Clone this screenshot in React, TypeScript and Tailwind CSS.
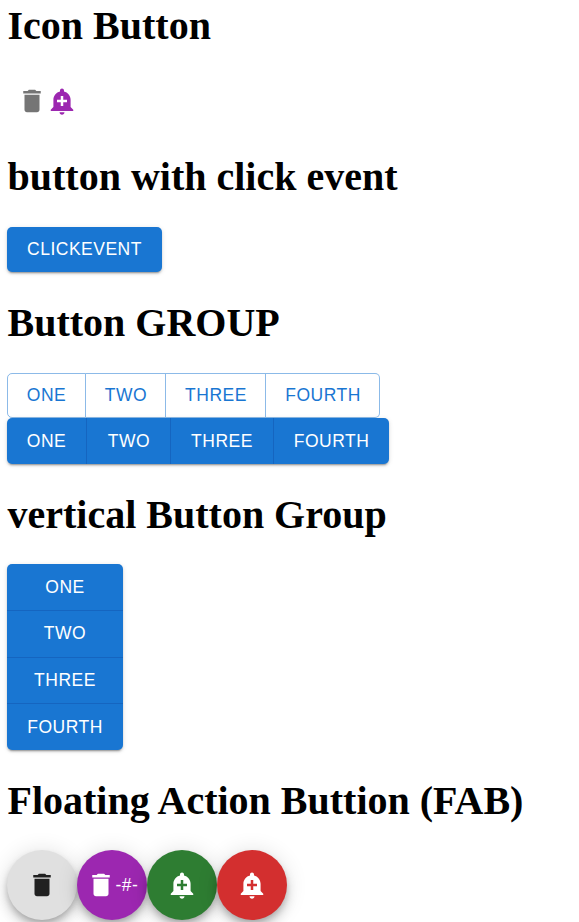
import type { ReactNode } from "react";

const trash = "M6 19c0 1.1.9 2 2 2h8c1.1 0 2-.9 2-2V7H6v12zM19 4h-3.5l-1-1h-5l-1 1H5v2h14V4z";
const bell =
  "M10.01 21.01c0 1.1.89 1.99 1.99 1.99s1.99-.89 1.99-1.99h-3.98zm8.87-4.19V11c0-3.25-2.25-5.97-5.29-6.69v-.72C13.59 2.71 12.88 2 12 2s-1.59.71-1.59 1.59v.72C7.37 5.03 5.12 7.75 5.12 11v5.82L3 18.94V20h18v-1.06l-2.12-2.12zM16 13.01h-3v3h-2v-3H8V11h3V8h2v3h3v2.01z";

function Icon({ d }: { d: string }) {
  return (
    <svg viewBox="0 0 24 24" className="size-[30px] shrink-0 fill-current">
      <path d={d} />
    </svg>
  );
}

function Heading({ children, className }: { children: ReactNode; className: string }) {
  return (
    <h1 className={`pl-[0.5px] whitespace-nowrap font-['Liberation_Serif',serif] text-[40px] leading-[46px] font-bold text-black ${className}`}>
      {children}
    </h1>
  );
}

const label = "flex items-center justify-center font-['Liberation_Sans',sans-serif] text-[17.5px] leading-none tracking-[0.5px]";
const raised = "rounded-[5px] bg-[#1976d2] text-white shadow-[0_3px_1px_-2px_rgba(0,0,0,0.2),0_2px_2px_0_rgba(0,0,0,0.14),0_1px_5px_0_rgba(0,0,0,0.12)]";
const fab =
  "flex size-[70px] items-center justify-center rounded-full shadow-[0_4px_6px_-1px_rgba(0,0,0,0.2),0_8px_12px_0_rgba(0,0,0,0.14),0_1px_22px_0_rgba(0,0,0,0.12)]";

const outlined = [
  { text: "ONE", width: "w-[79px]" },
  { text: "TWO", width: "w-[80px] pl-px" },
  { text: "THREE", width: "w-[100px] pl-px" },
  { text: "FOURTH", width: "w-[114px] pl-px" },
];
const contained = [
  { text: "ONE", width: "w-[80px]" },
  { text: "TWO", width: "w-[84px] pl-px" },
  { text: "THREE", width: "w-[103px]" },
  { text: "FOURTH", width: "w-[115px]" },
];
const vertical = [
  { text: "ONE", height: "h-[47px] pt-[2px]" },
  { text: "TWO", height: "h-[47px]" },
  { text: "THREE", height: "h-[46px]" },
  { text: "FOURTH", height: "h-[46px] pt-[2px]" },
];

export default function App() {
  return (
    <main className="flex h-[922px] flex-col items-start overflow-hidden bg-white pt-[3px] pl-[7px]">
      <Heading className="">Icon Button</Heading>
      <div className="mt-[37px] flex pl-[10px]">
        <button className="text-[#757575]"><Icon d={trash} /></button>
        <button className="text-[#9c27b0]"><Icon d={bell} /></button>
      </div>

      <Heading className="mt-[38px]">button with click event</Heading>
      <button className={`mt-[27px] h-[45px] w-[155px] ${label} ${raised}`}>CLICKEVENT</button>

      <Heading className="mt-[28px]">Button GROUP</Heading>
      <div className="mt-[27px] flex h-[45px]">
        {outlined.map((b) => (
          <button
            key={b.text}
            className={`border border-l-0 border-[#1976d2]/50 text-[#1976d2] first:rounded-l-[5px] first:border-l last:rounded-r-[5px] ${b.width} ${label}`}
          >
            {b.text}
          </button>
        ))}
      </div>
      <div className={`flex h-[46px] ${raised}`}>
        {contained.map((b) => (
          <button key={b.text} className={`border-r border-[#1565c0] pt-[2px] last:border-r-0 ${b.width} ${label}`}>
            {b.text}
          </button>
        ))}
      </div>

      <Heading className="mt-[28px]">vertical Button Group</Heading>
      <div className={`mt-[26px] flex w-[116px] flex-col ${raised}`}>
        {vertical.map((b) => (
          <button key={b.text} className={`border-b border-[#1565c0] last:border-b-0 ${b.height} ${label}`}>
            {b.text}
          </button>
        ))}
      </div>

      <Heading className="mt-[28px]">Floating Action Buttion (FAB)</Heading>
      <div className="mt-[26px] flex">
        <button className={`bg-[#e0e0e0] text-[#212121] ${fab}`}><Icon d={trash} /></button>
        <button className={`bg-[#9c27b0] text-white ${fab}`}>
          <Icon d={trash} />
          <span className={`pt-[2px] ${label}`}>-#-</span>
        </button>
        <button className={`bg-[#2e7d32] text-white ${fab}`}><Icon d={bell} /></button>
        <button className={`bg-[#d32f2f] text-white ${fab}`}><Icon d={bell} /></button>
      </div>
    </main>
  );
}
